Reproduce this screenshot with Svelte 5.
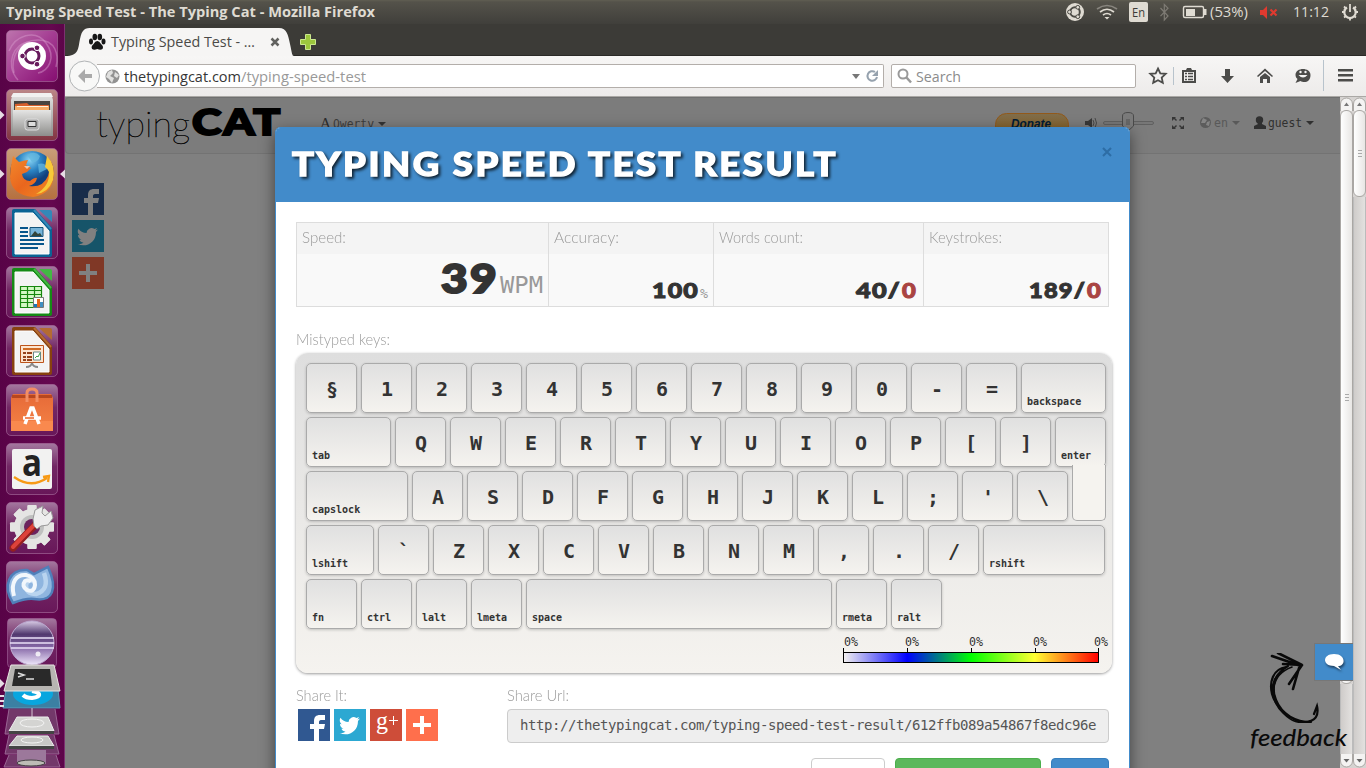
<script>
  const rows = [
    [...'§1234567890-='].map((k) => [k]).concat([['backspace', 85]]),
    [['tab', 85], ...[...'QWERTYUIOP[]'].map((k) => [k]), ['enter', 51]],
    [['capslock', 102], ...[..."ASDFGHJKL;'\\"].map((k) => [k])],
    [['lshift', 68], ...[...'`ZXCVBNM,./'].map((k) => [k]), ['rshift', 122]],
    [['fn', 51], ['ctrl', 51], ['lalt', 51], ['lmeta', 51], ['space', 306], ['rmeta', 51], ['ralt', 51]]
  ];
  const launcher = ['dash', 'files', 'firefox', 'writer', 'calc', 'impress', 'software', 'amazon', 'settings', 'monodevelop'];
  const docs = {
    writer: ['#0b6394', '#3388b8'],
    calc: ['#168a16', '#43b843'],
    impress: ['#87410f', '#b46b32']
  };
  const teeth = [0, 45, 90, 135, 180, 225, 270, 315];
</script>

{#snippet fit(text, w, h, y, size, cls)}
  <svg class="fit" width={w} height={h}><text class={cls} x="0" {y} font-size={size} textLength={w} lengthAdjust="spacingAndGlyphs">{text}</text></svg>
{/snippet}

{#snippet social(kind)}
  <svg class="social {kind}" width="32" height="32" viewBox="0 0 32 32">
    {#if kind.startsWith('fb')}
      <path d="M16 32V20h-4v-5h4v-3c0-4 2-6 6-6h5v5h-3c-2 0-3 .6-3 2v2h6l-1 5h-5v12z" />
    {:else if kind.startsWith('tw')}
      <path d="M26 9.500l-2.600.9 1.800-2.300-2.800 1A5 5 0 0 0 14.500 13C11 13 8 11 6.500 8.700 5 11 6 14 7.800 15.300L6 15c0 2.500 1.500 4 3.500 4.600l-2 .2c.7 1.700 2 2.700 4 2.900A8 8 0 0 1 5.500 24C14 28 24 23 24 12z" />
    {:else if kind === 'gp'}
      <text x="6" y="20" font-size="25" class="serif" textLength="12" lengthAdjust="spacingAndGlyphs">g</text>
      <path d="M19 11h9v1h-9zM23 7h1v9h-1z" />
    {:else}
      <path d="M14 7h4v7h7v4h-7v7h-4v-7H7v-4h7z" />
    {/if}
  </svg>
{/snippet}

{#snippet scroll(thumb, height)}
  <div class="scroll">
    <svg class="cap" width="13" height="14"><path d="M.5 14V7a6 6 0 0 1 12 0v7" fill="#f4f3f2" stroke="#aaa7a4" /><path d="M4 9l2.500-3.500L9 9z" fill="#777" /></svg>
    <div class="thumb" style="height:{height}px"><i></i><i></i><i></i></div>
    <div class="trough"></div>
    <svg class="cap" width="13" height="14"><path d="M.5 0v7a6 6 0 0 0 12 0V0" fill="#f4f3f2" stroke="#aaa7a4" /><path d="M3.500 5l3 3.500 3-3.500z" fill="#666" /></svg>
  </div>
{/snippet}

<svg width="0" height="0" class="defs">
  <defs>
    <linearGradient id="tile" x2="0" y2="1"><stop stop-color="#a4789f" /><stop offset=".45" stop-color="#722764" /><stop offset="1" stop-color="#681759" /></linearGradient>
    <linearGradient id="dashg" x2="1" y2="1"><stop stop-color="#bd75ae" /><stop offset=".5" stop-color="#a43c92" /><stop offset="1" stop-color="#850d70" /></linearGradient>
    <linearGradient id="filesg" x2="0" y2="1"><stop stop-color="#bb8687" /><stop offset="1" stop-color="#813442" /></linearGradient>
    <linearGradient id="foxg" x2="0" y2="1"><stop stop-color="#c99e79" /><stop offset="1" stop-color="#b5703f" /></linearGradient>
    <linearGradient id="metal" x2="0" y2="1"><stop stop-color="#e5e5e4" /><stop offset="1" stop-color="#8d8d8b" /></linearGradient>
    <radialGradient id="globe" cx=".45" cy=".2"><stop stop-color="#8bd5f5" /><stop offset=".5" stop-color="#2b84c4" /><stop offset="1" stop-color="#123f7c" /></radialGradient>
    <linearGradient id="flame" x2="1" y2="1"><stop stop-color="#f38a2c" /><stop offset=".5" stop-color="#e9661e" /><stop offset="1" stop-color="#f18c24" /></linearGradient>
    <linearGradient id="bag" x2="0" y2="1"><stop stop-color="#e66a38" /><stop offset="1" stop-color="#f58245" /></linearGradient>
    <linearGradient id="orb" x2="0" y2="1"><stop stop-color="#d8cbe5" /><stop offset=".3" stop-color="#51386e" /><stop offset=".6" stop-color="#8668a7" /><stop offset="1" stop-color="#efe7fb" /></linearGradient>
    <linearGradient id="don" x2="0" y2="1"><stop stop-color="#806e4d" /><stop offset="1" stop-color="#8b5b12" /></linearGradient>
  </defs>
</svg>

<div class="screen">
  <header class="panel">
    {@render fit('Typing Speed Test - The Typing Cat - Mozilla Firefox', 369, 24, 17, 14, 'ui bold cream')}
    <svg class="tray" width="306" height="24">
      <g fill="none" stroke="#dfdbd2">
        <circle cx="15" cy="12" r="9" fill="#dfdbd2" stroke="none" />
        <circle cx="15" cy="12" r="4.800" stroke="#4b4a44" stroke-width="2" />
        <g fill="#dfdbd2" stroke="#4b4a44"><circle cx="9.500" cy="12" r="1.900" /><circle cx="17.800" cy="7.300" r="1.900" /><circle cx="17.800" cy="16.700" r="1.900" /></g>
        <path d="M37 9q10-7 20 0" stroke="#88857e" stroke-width="1.700" /><path d="M40 12q7-5.500 14 0" stroke-width="1.700" /><path d="M43 15q4-3 8 0" stroke-width="1.700" />
        <path d="M44.500 17h5L47 19.500z" fill="#dfdbd2" stroke="none" />
      </g>
      <rect x="69" y="2" width="19" height="20" rx="2" fill="#dfdbd2" />
      <text class="ui" x="72" y="17" font-size="13.500" textLength="13" fill="#3c3b37" lengthAdjust="spacingAndGlyphs">En</text>
      <path d="M100.500 8l7.500 8-3.700 4V4.500l3.700 3.700-7.500 8" fill="none" stroke="#7e7b74" stroke-width="1.200" />
      <rect x="123.500" y="6.500" width="20" height="11" rx="1.500" fill="none" stroke="#dfdbd2" stroke-width="1.400" /><path d="M126 9h9v7h-9zM144 9h2.500v6H144z" fill="#dfdbd2" />
      <text class="ui" x="150" y="17" font-size="14" textLength="38" lengthAdjust="spacingAndGlyphs" fill="#dfdbd2">(53%)</text>
      <path d="M200 10h3l4-4v13l-4-4h-3z" fill="#e03a2f" /><path d="M210.500 9.500l6 6m0-6l-6 6" stroke="#e03a2f" stroke-width="2.200" />
      <text class="ui" x="233" y="17" font-size="14" textLength="36" lengthAdjust="spacingAndGlyphs" fill="#dfdbd2">11:12</text>
      <g stroke="#dfdbd2" fill="none" stroke-width="2.200">
        <path d="M287 7.500a5.700 5.700 0 1 0 6 0" /><path d="M290 4v8M282 12h2.500M295.500 12h2.500M284 17.500l2-1.500M294 16l2 1.500M290 18v2.500M284 6.500l2 2M294 8.500l2-2" stroke-width="1.800" />
      </g>
    </svg>
  </header>

  <div class="desktop">
    <aside class="launcher">
      {#each launcher as app}
        <svg class="app" width="65" height="52" viewBox="0 0 65 52">
          <rect x="6.500" y=".5" width="51" height="51" rx="4.500" fill={app === 'dash' ? 'url(#dashg)' : app === 'files' ? 'url(#filesg)' : app === 'firefox' ? 'url(#foxg)' : 'url(#tile)'} stroke="#a66b9b" stroke-opacity=".65" />
          {#if app === 'files' || app === 'firefox'}<path d="M0 21.500l4.500 4.500-4.500 4.500z" fill="#e6dce4" />{/if}
          {#if app === 'dash'}
            <g fill="none" stroke="#d99dce" stroke-opacity=".45" stroke-width="1.500"><path d="M9 21C15 6 35-2 46 13s2 28-8 30" /><path d="M14 43C10 26 20 10 38 10s21 15 18 27" /><path d="M18 50C4 35 14 12 30 12" /></g>
            <circle cx="32" cy="26" r="14" fill="#fff" /><circle cx="32" cy="26" r="7" fill="none" stroke="#671a5c" stroke-width="3" />
            <g fill="#671a5c" stroke="#fff"><circle cx="22.500" cy="26" r="2.800" /><circle cx="37" cy="17.800" r="2.800" /><circle cx="37" cy="34.200" r="2.800" /></g>
          {:else if app === 'files'}
            <path d="M13 4h38l2 7v36H11V11z" fill="url(#metal)" /><path d="M12 6l2-2h37l2 4H11z" fill="#f1f1f0" />
            <path d="M14 12h36v10H14z" fill="#474440" /><path d="M15 15l12-1 2 2h20v6H15z" fill="#d85f2b" /><path d="M15 17h34v5H15z" fill="#f7ad66" /><path d="M17 17h31v1H17z" fill="#fff3dc" />
            <path d="M13 21h38v26H13z" fill="url(#metal)" /><rect x="25" y="30" width="14" height="11" rx="2.500" fill="#aaa" stroke="#ddd" /><path d="M28 32.500h8v5h-8z" fill="#ddd" stroke="#333" />
          {:else if app === 'firefox'}
            <circle cx="32" cy="25" r="22" fill="url(#globe)" /><path d="M27 7q8-5 13 1-2 7-8 6zM38 16q8-2 9 5l-8 4z" fill="#64b8df" opacity=".75" />
            <path d="M12 13l1-5 6 6q6-2 9-2l-2 5 5 3-4 4-5 2q1 7 8 7 5-4 7-3-1 6-8 8 14 2 19-10 4-12-2-20 8 6 8 18Q53 46 33 49 11 47 10 29q0-9 2-16z" fill="url(#flame)" />
            <path d="M47 8q9 9 6 24-5 13-17 14 14-8 13-22-1-3-4-5z" fill="#f7c938" /><path d="M24 18l6 0-3 3z" fill="#f7c4a5" />
            <path d="M65 21.500L60 26l5 4.500z" fill="#e6dce4" />
          {:else if docs[app]}
            <path d="M14 2h21l17 19v27q0 2-2 2H14q-2 0-2-2V4q0-2 2-2z" fill={docs[app][0]} />
            <path d="M39 3h11q2 0 2 2v10z" fill={docs[app][1]} /><path d="M15 6h18l16 18v23H15z" fill="#f3f3f3" stroke="#fff" /><path d="M34 3l17 19" stroke={docs[app][1]} stroke-width="2" />
            {#if app === 'writer'}
              <path d="M20 21h8M20 25h8M20 29h8M20 33h24M20 37h24M20 41h18" stroke="#07558b" stroke-width="2" /><path d="M30 20.500h13v9H30z" fill="#77b4d9" stroke="#16547b" /><path d="M31 29l4-5 3 3 2-1 2 3z" fill="#33443a" />
            {:else if app === 'calc'}
              <path d="M20.500 20.500h21v21h-21zM20.500 24.500h21m-21 4h21m-21 4h21m-21 4h21M27.500 20.500v21m7-21v21" fill="#d3f8c4" stroke="#17870e" stroke-width="1.200" /><path d="M33.500 31.500h10v10h-10z" fill="#fff" stroke="#777" /><path d="M34 38h3v3h-3z" fill="#1679b7" /><path d="M37 33h3v8h-3z" fill="#e46619" /><path d="M40 36h3v5h-3z" fill="#418fc2" />
            {:else}
              <path d="M20.500 20.500h23v17h-23z" fill="#fde5cf" stroke="#bc541b" /><path d="M23 24h18" stroke="#cf6b24" stroke-width="2" /><path d="M23 28h3m1 0h5m-9 4h3m1 0h5m-9 3h3m1 0h5" stroke="#96431b" stroke-width="1.800" /><path d="M33.500 27h7v8h-7z" fill="#fff" stroke="#688" /><path d="M35 33l2-2 1 1 2-4" stroke="#3ca245" fill="none" /><path d="M26 42q5 0 6-4 1 4 6 4" fill="none" stroke="#888" stroke-width="2" />
            {/if}
          {:else if app === 'software'}
            <path d="M13 10h38l2 4v33H11V14z" fill="url(#bag)" /><path d="M12 11h40v3H12z" fill="#b7461f" /><path d="M11 37h42v10H11z" fill="#f9894e" /><path d="M27 18V9q0-4 5-4t5 4v9" fill="none" stroke="#f28e65" stroke-width="3" />
            <path d="M25 40l6-16h2l6 16M23 34h18" fill="none" stroke="#fff" stroke-width="3.500" /><path d="M25 34h9" stroke="#ed6327" stroke-width="1.500" />
          {:else if app === 'amazon'}
            <rect x="12" y="6" width="40" height="40" rx="2" fill="#f2f2f1" /><text class="ui bold" x="22" y="33" font-size="38" fill="#222" textLength="20" lengthAdjust="spacingAndGlyphs">a</text><path d="M14 34q17 12 33 1M43 34l6-1-1 6" fill="none" stroke="#f79a16" stroke-width="2.300" />
          {:else if app === 'settings'}
            <g fill="#e5e5e3">{#each teeth as a}<rect x="27.500" y="3" width="9" height="44" rx="1" transform="rotate({a} 32 25)" />{/each}<circle cx="32" cy="25" r="18" /></g>
            <circle cx="32" cy="25" r="12" fill="#bfc0bf" /><circle cx="32" cy="25" r="8" fill="#6b235e" />
            <path d="M13 46l26-27" stroke="#941f1f" stroke-width="7" stroke-linecap="round" /><path d="M13 45l24-25" stroke="#dd423a" stroke-width="4" stroke-linecap="round" /><path d="M33 17l2-9 8-4-1 7 3 3 6-5 2 7-5 7-7 1-4 3-3-3z" fill="#eee" stroke="#999" />
          {:else}
            <path d="M13 42C2 25 9 8 27 9l7 4 14-7c10 22 5 35-14 32-7-1-13 1-21 4z" fill="#8fb5df" stroke="#4f7fb9" stroke-width="2.500" /><path d="M44 12q6 17-8 21-10 0-10-9 2-7 9-3" fill="none" stroke="#b9d4ef" stroke-width="4.500" /><path d="M14 35C10 21 17 13 26 14q9 2 9 10-1 8-8 5-6-4-2-9 4-2 6 1" fill="none" stroke="#f2f7fc" stroke-width="4" />
          {/if}
        </svg>
      {/each}
      <svg class="folded" width="65" height="155" viewBox="0 613 65 155">
        <rect x="7.500" y="618.500" width="49" height="49" rx="4" fill="url(#tile)" stroke="#a06398" stroke-opacity=".65" />
        <circle cx="32" cy="643" r="22" fill="url(#orb)" stroke="#bba9d1" /><path d="M11 638h43M10 643h44M11 648h43" stroke="#eadff7" stroke-width="1.500" /><circle cx="38" cy="654" r="2.500" fill="#fff" opacity=".8" />
        <path d="M6 689h52l2 19H3z" fill="#3b80a3" stroke="#5d9db9" /><ellipse cx="33" cy="694" rx="20" ry="11" fill="#08a6df" /><path d="M23 695q3 3 9 3 8-1 7-4-1-2-7-3" stroke="#fff" stroke-width="4" fill="none" />
        <path d="M11 665h43l6 26H4z" fill="#b7b5b2" stroke="#e7e4e1" /><path d="M15 669h35l2 17H12z" fill="#292929" /><path d="M18 673l6 2-6 2m8 2h8" fill="none" stroke="#ddd" stroke-width="1.500" />
        <path d="M9 709l-4 25h54l-4-25M9 735l-4 19h54l-5-19M9 755l-5 12h56l-4-12" fill="#73386a" stroke="#9a6594" />
        <path d="M32 708v16" stroke="#d6c5d3" /><path d="M17 717h31l6 14H9z" fill="#d4d4d2" stroke="#eee" /><path d="M9 731h45v3H9z" fill="#444" /><ellipse cx="32" cy="723" rx="12" ry="4" fill="none" stroke="#f4f4f4" />
        <path d="M17 736h31l6 10H9z" fill="#c8c8c6" stroke="#eee" /><path d="M9 746h45v3H9z" fill="#444" /><ellipse cx="32" cy="740" rx="11" ry="3" fill="none" stroke="#f4f4f4" />
        <path d="M17 750h29v14H17z" fill="#9c789b" /><ellipse cx="31" cy="763" rx="14" ry="3" fill="#bdbcb6" stroke="#444" />
        <path d="M0 679l4.500 4.500L0 688zM0 695h4v2H0m0 3h4v2H0m0 3h4v2H0" fill="#e6dce4" />
      </svg>
    </aside>

    <main>
      <div class="tabs">
        <svg width="229" height="32">
          <path d="M0 32C14 32 13 25 15 15S20 4 27 4h187c8 0 9 7 11 16s2 12 4 12z" fill="#f6f5f4" />
          <g fill="#171717"><ellipse cx="26" cy="17.500" rx="2" ry="3" /><ellipse cx="29.800" cy="13" rx="2.300" ry="3.200" /><ellipse cx="34.800" cy="13" rx="2.300" ry="3.200" /><ellipse cx="38.500" cy="17.500" rx="2" ry="3" /><path d="M32.300 17q2.200 0 3.700 3 3 2.500 1.500 5-2 1.500-5.200 0-3.300 1.500-5.200 0-1.500-2.500 1.500-5 1.500-3 3.700-3z" /></g>
          <text class="ui" x="46" y="23" font-size="14.500" fill="#4b4a47" textLength="144" lengthAdjust="spacingAndGlyphs">Typing Speed Test - …</text>
          <path d="M206.500 14.500l7 7m0-7l-7 7" stroke="#62625f" stroke-width="2.500" />
        </svg>
        <svg class="plus" width="16" height="16"><path d="M5.500.5h5v5h5v5h-5v5h-5v-5h-5v-5h5z" fill="#9cc73d" stroke="#cbe88d" /></svg>
      </div>

      <div class="toolbar">
        <svg class="back" width="31" height="32"><circle cx="15.500" cy="16" r="15" fill="#f8f8f7" stroke="#b0b3b5" /><path d="M16 9l-7 7 7 7v-5h7v-4h-7z" fill="#aaa" /></svg>
        <div class="address">
          <svg width="15" height="15"><circle cx="7.500" cy="7.500" r="7" fill="#929292" /><path d="M3 3l4-2 1 3-3 3 4 2-2 5-3-4-3-2zM10 3l4 3-2 3-3-2z" fill="#e0e0df" /></svg>
          <svg class="url" width="243" height="22"><text class="ui" x="0" y="16" font-size="14.500" fill="#363636" textLength="117" lengthAdjust="spacingAndGlyphs">thetypingcat.com</text><text class="ui" x="117" y="16" font-size="14.500" fill="#999" textLength="125" lengthAdjust="spacingAndGlyphs">/typing-speed-test</text></svg>
          <svg class="reload" width="30" height="22"><path d="M1 9h8l-4 5z" fill="#777" /><path d="M24 7a4.800 4.800 0 1 0 2 5" fill="none" stroke="#96a2ae" stroke-width="2" /><path d="M27 5v6h-6z" fill="#96a2ae" /></svg>
        </div>
        <div class="search"><svg width="16" height="16"><circle cx="6" cy="6" r="4.500" fill="none" stroke="#999" stroke-width="2" /><path d="M9.500 9.500l4.500 5" stroke="#999" stroke-width="2.500" /></svg>{@render fit('Search', 45, 22, 16, 14.5, 'ui grey')}</div>
        <svg class="tools" width="216" height="40" fill="#4c4c4a">
          <path d="M8 12.500l2.300 4.800 5.400.5-4 3.700 1.100 5.300L8 24.200l-4.800 2.600 1.100-5.300-4-3.700 5.400-.5z" transform="translate(6 0)" fill="none" stroke="#4c4c4a" stroke-width="1.800" />
          <path d="M29.500 11v18M179.500 4v31" stroke="#b8c3cc" />
          <path d="M38 14h4l1-2h4l1 2h4v13H38zM40 16v9h10v-9z" fill-rule="evenodd" /><path d="M41 17.500h2m1 0h5m-8 3h2m1 0h5m-8 3h2m1 0h5" stroke="#4c4c4a" stroke-width="1.500" />
          <path d="M81 13h5v7h4l-6.500 7L77 20h4z" /><path d="M113 20l8-7.500 8 7.500-1 1-7-6-7 6zM116 21l5-4 5 4v6h-3v-4h-4v4h-3z" />
          <path d="M151.500 19c0-8 15-8 15 0s-7 8-10 6l-5 2 2-4c-1-1-2-2-2-4z" /><path d="M154.500 19q4.500 5 9 0z" fill="#f4f4f3" /><circle cx="156.500" cy="16" r="1.200" fill="#f4f4f3" /><circle cx="161.500" cy="16" r="1.200" fill="#f4f4f3" />
          <path d="M194 13h15v2.500h-15zm0 5h15v2.500h-15zm0 5h15v2.500h-15z" />
        </svg>
      </div>

      <div class="content">
        <div class="page">
          <nav>
            <div class="brand">{@render fit('typing', 94, 46, 31, 36, 'thin black')}{@render fit('CAT', 90, 38, 29, 36, 'heavy logo')}</div>
            <svg class="layout" width="70" height="30"><text x="0" y="22" font-size="15" class="serif" fill="#2d2d2d">A</text><text class="mono" x="13" y="22" font-size="13" fill="#3d3d3d" textLength="41" lengthAdjust="spacingAndGlyphs">Qwerty</text><path d="M58 16h8l-4 4z" fill="#333" /></svg>
            <svg class="donate" width="74" height="26"><rect x=".5" y=".5" width="73" height="25" rx="11" fill="url(#don)" stroke="#92591a" /><text class="arial" x="16" y="14.500" font-size="13" fill="#001b35" textLength="40" lengthAdjust="spacingAndGlyphs">Donate</text></svg>
            <svg class="controls" width="240" height="30">
              <path d="M0 13h3l4-3v10l-4-3H0z" fill="#383838" /><path d="M8 12q2 3 0 6m2-8q3 5 0 10" fill="none" stroke="#484848" />
              <rect x="18.500" y="13.500" width="50" height="3" rx="1.500" fill="#777" stroke="#606060" /><path d="M37.500 8q0-3.500 5.500-3.500T48.500 8v10L43 23l-5.500-5z" fill="#7b7b7b" stroke="#4a4a4a" /><path d="M41 12h4m-4 2h4m-4 2h4" stroke="#555" />
              <path d="M87 9h4l-1 1 2 2-1 1-2-2-2 2zm12 0h-4l1 1-2 2 1 1 2-2 2 2zM87 21h4l-1-1 2-2-1-1-2 2-2-2zm12 0h-4l1-1-2-2 1-1 2 2 2-2z" fill="#353535" />
              <circle cx="120.500" cy="14.500" r="5.500" fill="#5c5c5c" /><path d="M118 10l4 2-2 3h-4zM122 14l3-1-1 5-3-1z" fill="#858585" />
              <text class="mono" x="129" y="19" font-size="13" fill="#595959" textLength="14" lengthAdjust="spacingAndGlyphs">en</text><path d="M147 13h8l-4 4z" fill="#595959" />
              <circle cx="174.500" cy="12" r="3.700" fill="#303030" /><path d="M172 14h5v2l4 2v3h-12v-3l4-2z" fill="#303030" />
              <text class="mono" x="183" y="19" font-size="13" fill="#303030" textLength="34" lengthAdjust="spacingAndGlyphs">guest</text><path d="M221 13h8l-4 4z" fill="#303030" />
            </svg>
          </nav>
          <div class="side">{@render social('fb dim')}{@render social('tw dim')}{@render social('add dim')}</div>

          <section class="modal">
            <div class="head">{@render fit('TYPING SPEED TEST RESULT', 546, 42, 32, 32, 'heavy title')}<svg width="10" height="12"><path d="M1 2l8 8m0-8l-8 8" stroke="#2d6da5" stroke-width="2.100" /></svg></div>
            <div class="body">
              <div class="stats">
                <div><h4>{@render fit('Speed:', 44, 30, 20, 15.5, 'thin label')}</h4><p>{@render fit('39', 58, 40, 33, 39, 'heavy dark bigger')}{@render fit('WPM', 43, 40, 33, 23, 'mono muted')}</p></div>
                <div><h4>{@render fit('Accuracy:', 65, 30, 20, 15.5, 'thin label')}</h4><p>{@render fit('100', 47, 30, 26, 20, 'heavy dark')}{@render fit('%', 8, 30, 26, 12.5, 'mono muted')}</p></div>
                <div><h4>{@render fit('Words count:', 84, 30, 20, 15.5, 'thin label')}</h4><p>{@render fit('40/', 45, 30, 26, 20, 'heavy dark')}{@render fit('0', 15, 30, 26, 20, 'heavy red')}</p></div>
                <div><h4>{@render fit('Keystrokes:', 73, 30, 20, 15.5, 'thin label')}</h4><p>{@render fit('189/', 57, 30, 26, 20, 'heavy dark')}{@render fit('0', 15, 30, 26, 20, 'heavy red')}</p></div>
              </div>
              <div class="mistyped">{@render fit('Mistyped keys:', 94, 24, 16, 15.5, 'thin label')}</div>
              <div class="keyboard">
                {#each rows as row}
                  <div class="row">
                    {#each row as [key, width]}
                      <div class="key" class:named={width} class:enter={key === 'enter'} style="width:{width ?? 51}px">{key}</div>
                    {/each}
                  </div>
                {/each}
                <svg class="scale" width="270" height="30">
                  <defs><linearGradient id="heat"><stop stop-color="#f3f1ef" /><stop offset=".25" stop-color="#00f" /><stop offset=".5" stop-color="#0f0" /><stop offset=".75" stop-color="#ff3" /><stop offset="1" stop-color="#f00" /></linearGradient></defs>
                  {#each [1, 62, 126, 190, 251] as x}<text class="mono" {x} y="11" font-size="12" fill="#333" textLength="14" lengthAdjust="spacingAndGlyphs">0%</text>{/each}
                  <rect x=".5" y="17.500" width="255" height="10" fill="url(#heat)" stroke="#000" /><path d="M.5 13v5m64-5v5m64-5v5m64-5v5m63-5v5" stroke="#000" />
                </svg>
              </div>
              <div class="share">
                <div>{@render fit('Share It:', 51, 24, 16, 15.5, 'thin label')}<div class="buttons">{@render social('fb')}{@render social('tw')}{@render social('gp')}{@render social('add')}</div></div>
                <div class="link">{@render fit('Share Url:', 62, 24, 16, 15.5, 'thin label')}<div class="field">http://thetypingcat.com/typing-speed-test-result/612ffb089a54867f8edc96e</div></div>
              </div>
              <div class="actions"><b></b><b></b><b></b></div>
            </div>
          </section>
        </div>
        {@render scroll(0, 574)}{@render scroll(1, 87)}
        <svg class="feedback" width="103" height="102">
          <g fill="none" stroke="#090909" stroke-linecap="round"><path d="M24 3L53 13M30 0l24 12-19-1M54 12L41 31m10-16l-6 21" stroke-width="2.600" /><path d="M38 14C25 16 21 29 24 41s20 28 32 28 15-7 13-16l-3 8M40 13C28 20 22 32 28 47s20 22 35 22" stroke-width="2.200" /><path d="M35 17C19 28 23 48 35 60s18 9 27 9M44 14C33 18 27 24 26 35s5 23 16 30" stroke-width="1.600" /></g>
          <text class="hand" x="2" y="93" font-size="23" textLength="97" lengthAdjust="spacingAndGlyphs">feedback</text>
        </svg>
        <div class="chat"><svg width="22" height="20"><path d="M11 2c12 0 12 12 4 12l3 4-7-4C-1 14-1 2 11 2z" fill="#fff" /></svg></div>
      </div>
    </main>
  </div>
</div>

<style>
  :global(body) { margin: 0; overflow: hidden; }
  *, *::after { box-sizing: border-box; }
  svg { display: block; flex: none; }
  .defs { position: absolute; }
  .fit, .app { overflow: visible; }
  .ui { font-family: "Open Sans", "Noto Sans", sans-serif; }
  .bold { font-weight: 700; }
  .cream { fill: #dfdbd2; }
  .grey { fill: #8c8c8c; }
  .mono { font-family: "DejaVu Sans Mono", monospace; }
  .serif { font-family: "Liberation Serif", serif; }
  .arial { font-family: "Liberation Sans", sans-serif; font-weight: 700; font-style: italic; }
  .thin { font-family: Lato, sans-serif; font-weight: 100; }
  .heavy { font-family: Lato, sans-serif; font-weight: 900; letter-spacing: 1px; }
  .black { fill: #000; stroke: #000; stroke-width: .4px; }
  .logo { fill: #000; stroke: #000; stroke-width: 2px; letter-spacing: 1.5px; }
  .label { fill: #8a8a8a; font-weight: 300; opacity: .85; }
  .dark { fill: #333; stroke: #333; stroke-width: 1px; }
  .bigger { stroke-width: 2px; letter-spacing: 2px; }
  .red { fill: #a94442; stroke: #a94442; stroke-width: 1px; }
  .muted { fill: #999; }
  .title { fill: #fff; stroke: #fff; stroke-width: 1.3px; letter-spacing: 2.2px; filter: drop-shadow(2px 2px 1.5px rgba(0, 0, 0, .75)); }
  .hand { font-family: Lato, sans-serif; font-style: italic; font-weight: 500; fill: #0a0a0a; }

  .screen { width: 1366px; height: 768px; overflow: hidden; display: flex; flex-direction: column; background: #3c3b37; }
  .panel { height: 24px; flex: none; display: flex; justify-content: space-between; padding-left: 6px; background: linear-gradient(#605e52, #54524a 2px, #403f3b); }
  .desktop { flex: 1; min-height: 0; display: flex; }
  .launcher { width: 65px; padding-top: 6px; display: flex; flex-direction: column; gap: 7px; background: linear-gradient(90deg, #580347, #65084f 80%, #5c0549); border-right: 1px solid #7d3070; }
  .folded { margin-top: -7px; overflow: visible; }
  main { width: 1301px; display: flex; flex-direction: column; }
  .tabs { height: 32px; flex: none; display: flex; border-bottom: 1px solid #2b2a27; }
  .plus { margin: 10px 0 0 6px; }
  .toolbar { height: 41px; flex: none; display: flex; align-items: center; background: linear-gradient(#f7f6f5, #edebea); border-bottom: 1px solid #aaa8a5; }
  .back { margin-left: 4px; z-index: 1; }
  .address { width: 787px; height: 24px; margin-left: -3px; padding: 0 2px 0 8px; display: flex; align-items: center; background: #fff; border: 1px solid #b3aeaa; border-left: 0; border-radius: 0 2px 2px 0; }
  .url { margin: 2px 0 0 4px; }
  .reload { margin-left: auto; }
  .search { width: 245px; height: 24px; margin-left: 7px; padding-left: 5px; display: flex; align-items: center; gap: 3px; background: #fff; border: 1px solid #b3aeaa; border-radius: 2px; }
  .search .fit { margin-top: 2px; }
  .tools { margin-left: 8px; }

  .content { height: 671px; display: flex; position: relative; }
  .page { width: 1275px; height: 671px; position: relative; overflow: hidden; background: #808080; }
  nav { height: 57px; display: flex; border: 1px solid #737373; border-top-color: #6f6f6f; border-right: 0; border-radius: 4px 0 0 4px; background: #7c7c7c; }
  .brand { display: flex; padding: 8px 0 0 30px; gap: 2px; }
  .layout { margin: 8px 0 0 38px; }
  .donate { margin: 15px 0 0 605px; }
  .controls { margin: 10px 0 0 16px; }
  .side { width: 32px; display: grid; gap: 5px; margin: 29px 0 0 7px; }
  .social { fill: #fff; background: #305891; }
  .tw { background: #2ca8d2; }
  .gp { background: #ce4d39; }
  .add { background: #ff6f4c; }
  .dim { fill: #808080; background: #182c49; }
  .tw.dim { background: #165469; }
  .add.dim { background: #803826; }
  .feedback { position: absolute; left: 1183px; top: 556px; }

  .modal { position: absolute; left: 210px; top: 30px; width: 855px; height: 720px; background: #fff; border: 1px solid #428bca; border-radius: 5px 5px 0 0; box-shadow: 0 5px 15px rgba(0, 0, 0, .5); }
  .head { height: 74px; padding: 16px 17px 0 16px; display: flex; justify-content: space-between; background: #428bca; border-radius: 4px 4px 0 0; }
  .head > svg:last-child { margin-top: 2px; }
  .body { padding: 20px 20px 0; }
  .stats { height: 85px; display: grid; grid-template-columns: 251px 165px 210px 185px; border: 1px solid #ddd; width: 813px; background: #f9f9f9; }
  .stats > div { display: flex; flex-direction: column; }
  .stats > div + div { border-left: 1px solid #ddd; }
  h4 { height: 31px; margin: 0; padding-left: 5px; background: #f4f4f4; }
  .stats p { margin: 0; height: 52px; padding: 0 5px 4px 0; display: flex; justify-content: flex-end; align-items: flex-end; gap: 1px; }
  .stats > div:first-child p { padding: 0 5px 6px 0; gap: 1px; }
  .stats > div:nth-child(3) p, .stats > div:nth-child(4) p { padding-right: 6px; }
  .mistyped { height: 46px; padding-top: 22px; }
  .keyboard { width: 816px; height: 320px; padding: 10px; display: flex; flex-direction: column; gap: 4px; border-radius: 12px; background: linear-gradient(#dedede, #f5f3ef); box-shadow: 0 1px 3px rgba(0, 0, 0, .4); }
  .row { display: flex; gap: 4px; height: 50px; flex: none; }
  .key { height: 50px; flex: none; display: flex; align-items: center; justify-content: center; border: 1px solid #aaa; border-radius: 5px; background: linear-gradient(#e0e0e0, #f5f3ef); box-shadow: 0 1px 3px rgba(0, 0, 0, .2); color: #333; font: bold 20px "DejaVu Sans Mono", monospace; padding: 2px 0 0 1px; }
  .named { font-size: 10px; align-items: flex-end; justify-content: flex-start; padding: 0 0 5px 5px; }
  .enter { position: relative; }
  .enter::after { content: ""; position: absolute; left: 16px; top: 47px; width: 34px; height: 56px; border: 1px solid #aaa; border-top: 0; border-radius: 0 0 5px 5px; background: #f5f3ef; }
  .scale { align-self: flex-end; margin: 2px -11px 0 0; overflow: visible; }
  .share { display: flex; height: 70px; padding-top: 12px; }
  .share > div { width: 211px; }
  .share > .link { width: 602px; }
  .buttons { display: flex; gap: 4px; padding-left: 2px; }
  .field { height: 34px; padding: 0 12px; white-space: pre; overflow: hidden; border: 1px solid #ccc; border-radius: 4px; background: #eee; color: #555; font: 14px/31px "DejaVu Sans Mono", monospace; letter-spacing: -.43px; }
  .actions { display: flex; justify-content: flex-end; gap: 10px; padding-top: 15px; }
  .actions b { height: 40px; width: 58px; border-radius: 4px; border: 1px solid #357ebd; background: #428bca; }
  .actions b:first-child { width: 74px; border-color: #ccc; background: #fff; }
  .actions b:nth-child(2) { width: 146px; border-color: #4cae4c; background: #5cb85c; }

  .scroll { width: 13px; height: 671px; display: flex; flex-direction: column; background: #d6d3d1; }
  .thumb { flex: none; margin-top: -1px; display: flex; flex-direction: column; align-items: center; justify-content: center; gap: 2px; border: 1px solid #aaa7a4; border-radius: 6px; background: linear-gradient(90deg, #fff, #e8e6e4); }
  .thumb i { width: 4px; height: 1px; background: #aaa; }
  .trough { flex: 1; border: solid #bbb; border-width: 0 1px; background: linear-gradient(90deg, #cfccca, #e3e1df); }
  .chat { position: absolute; left: 1249px; top: 546px; width: 39px; height: 38px; display: grid; place-items: center; border: 1px solid #777; border-right: 0; background: #428bca; }
  .chat svg { filter: drop-shadow(1px 2px 1px #1e4264); }
</style>
